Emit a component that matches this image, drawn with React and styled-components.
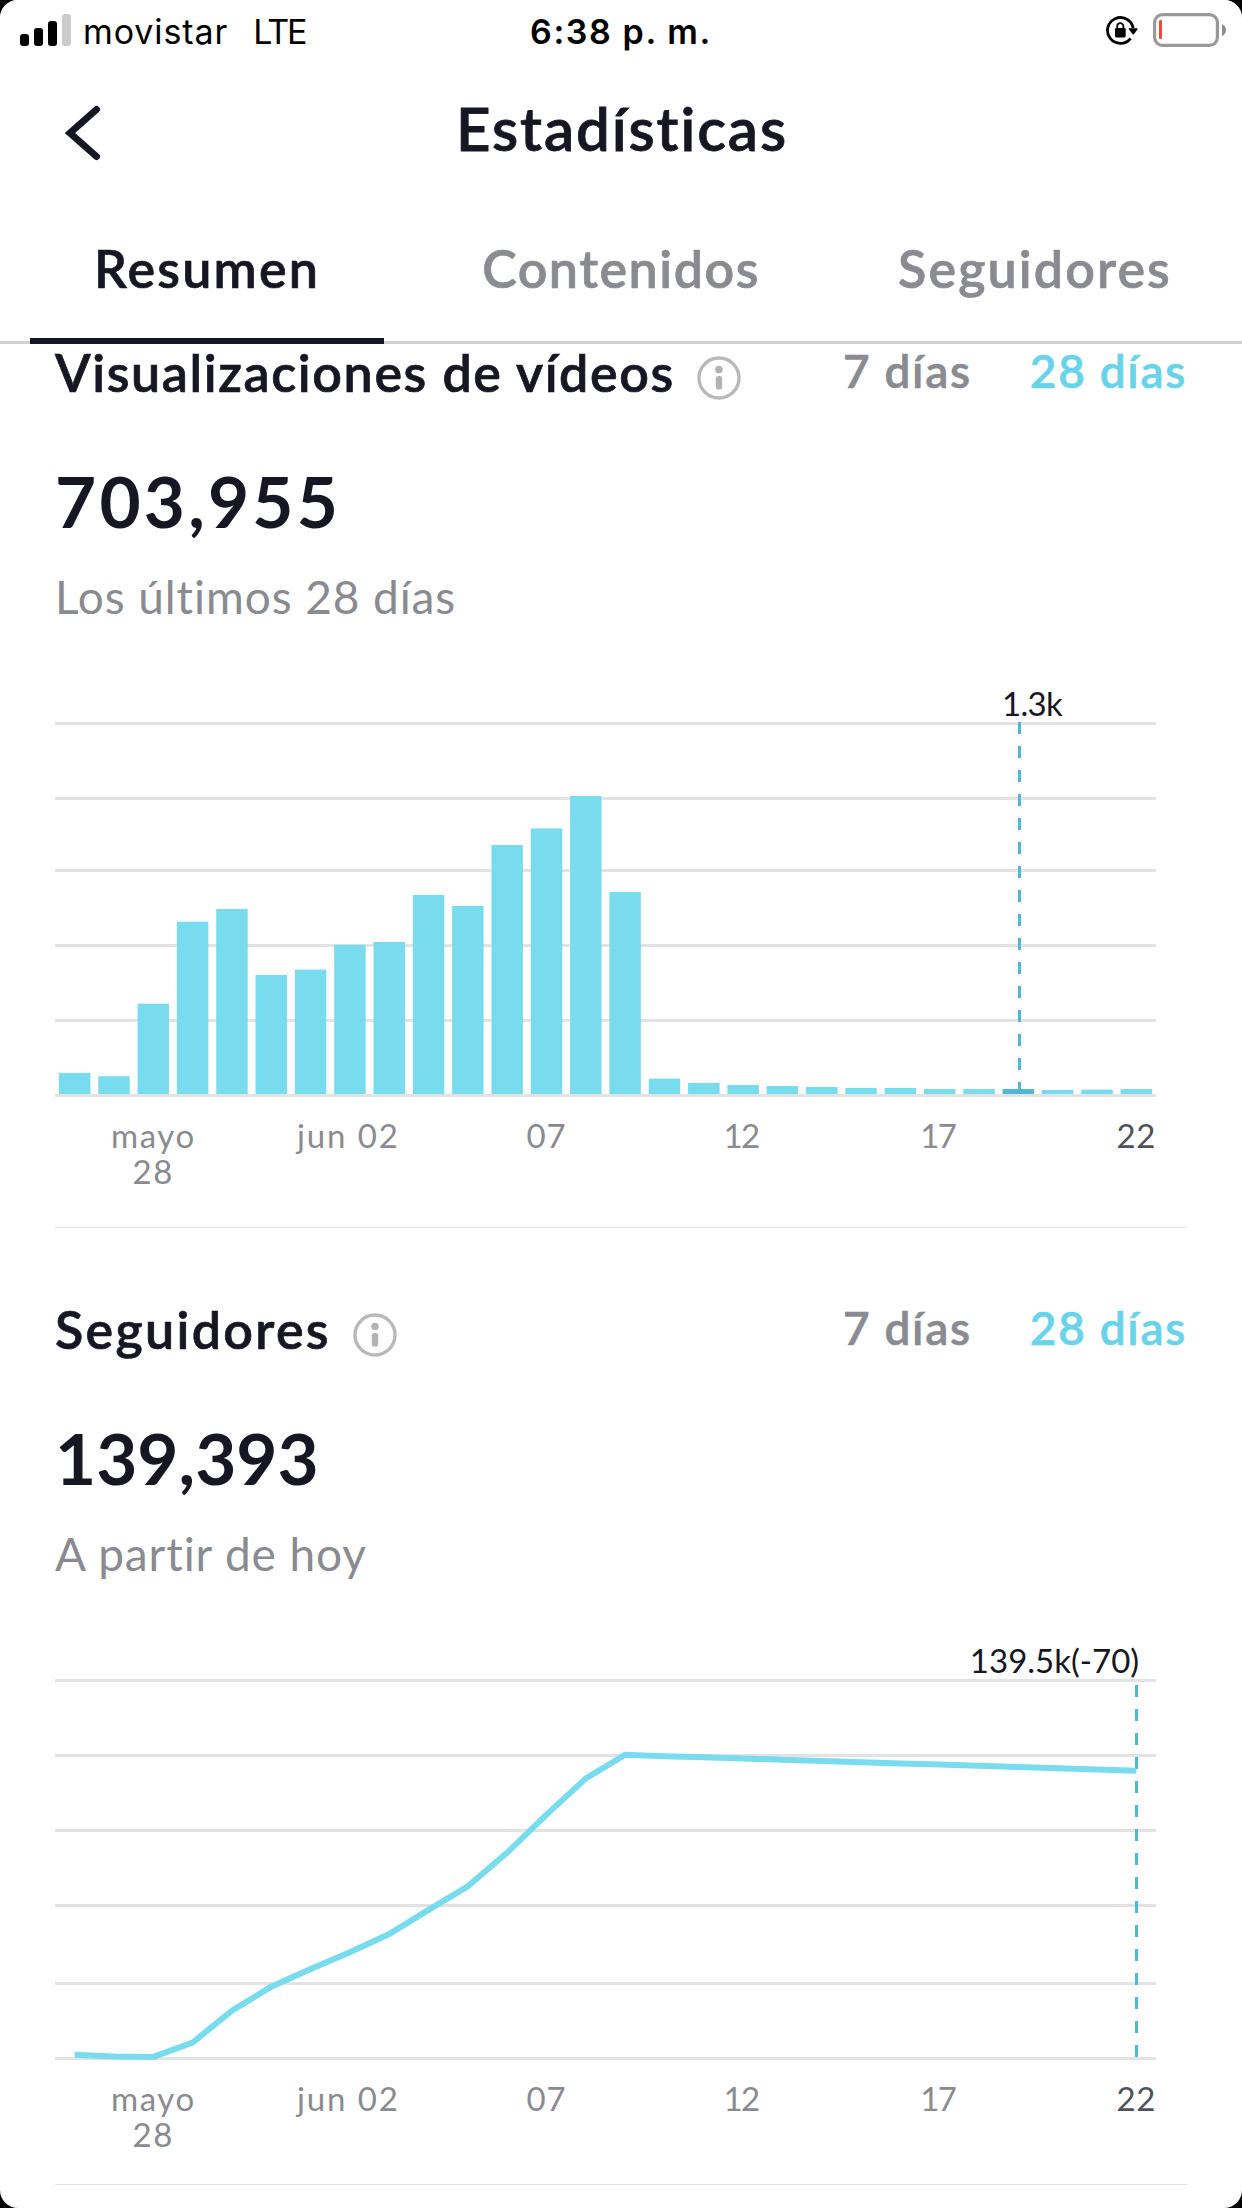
import React from 'react';
import styled, { createGlobalStyle } from 'styled-components';

const GlobalStyle = createGlobalStyle`
  * {
    box-sizing: border-box;
  }

  body {
    margin: 0;
    background-color: #000000;
  }
`;

const Screen = styled.div`
  display: flex;
  flex-direction: column;
  width: 1242px;
  height: 2208px;
  overflow: hidden;

  font-family: Lato, "Liberation Sans", sans-serif;
  color: #161722;
  background-color: #ffffff;
  border-radius: 18px;
`;

const TopArea = styled.header`
  flex: none;
  z-index: 1;
  background-color: #ffffff;
`;

const StatusBar = styled.div`
  display: grid;
  grid-template-columns: 1fr auto 1fr;
  align-items: center;
  height: 60px;
  padding: 3px 16px 0 20px;

  font-family: Inter, "Liberation Sans", sans-serif;
  font-size: 34px;
  line-height: 42px;
  color: #000000;
`;

const StatusGroup = styled.div`
  display: flex;
  align-items: center;
  justify-content: ${({ $end }) => ($end ? 'flex-end' : 'flex-start')};
`;

const StatusIcon = styled.svg`
  display: block;
  flex: none;
  margin-top: ${({ $shift }) => $shift || 0}px;
  margin-right: ${({ $gap }) => $gap || 0}px;
`;

const Carrier = styled.span`
  margin-right: 25px;
  letter-spacing: 0.9px;
`;

const Network = styled.span`
  letter-spacing: -2px;
`;

const Clock = styled.span`
  margin-right: 4px;
  font-weight: 600;
  letter-spacing: 1.6px;
`;

const NavBar = styled.div`
  display: grid;
  grid-template-columns: 1fr auto 1fr;
  align-items: center;
  height: 146px;
  padding: 0 64px;
`;

const BackButton = styled.button`
  width: 40px;
  height: 56px;
  padding: 0;

  background: none;
  border: none;
  cursor: pointer;
`;

const Title = styled.h1`
  margin: -10px -2px 0 0;
  font-size: 60px;
  font-weight: 600;
  line-height: 70px;
  letter-spacing: 1.9px;
  -webkit-text-stroke: 0.8px;
`;

const Tabs = styled.nav`
  display: grid;
  grid-template-columns: repeat(3, 1fr);
  height: 138px;
  box-shadow: inset 0 -3px 0 #d0d0d0;
`;

const Tab = styled.button`
  height: 138px;
  margin: 0 30px;
  padding: 0 0 8px;

  font-family: inherit;
  font-size: 52px;
  font-weight: 600;
  letter-spacing: ${({ $spacing }) => $spacing}px;
  -webkit-text-stroke: 0.7px;
  color: ${({ $active }) => ($active ? '#161722' : '#8a8b91')};

  background: none;
  border: none;
  border-bottom: 6px solid ${({ $active }) => ($active ? '#161722' : 'transparent')};
  cursor: pointer;
`;

/* the list is scrolled, so its first section starts beneath the tabs */
const Content = styled.main`
  flex: none;
  margin-top: -73px;
`;

const Section = styled.section`
  height: 957px;
  margin: 0 55px;
  padding-top: 71px;
  border-bottom: 1px solid #e3e3e4;
`;

const SectionHeader = styled.div`
  display: flex;
  align-items: center;
  height: 60px;
`;

const Heading = styled.h2`
  margin: 0;
  font-size: 52px;
  font-weight: 600;
  line-height: 60px;
  letter-spacing: ${({ $spacing }) => $spacing}px;
  white-space: nowrap;
  -webkit-text-stroke: 0.7px;
`;

const InfoIcon = styled.svg`
  flex: none;
  margin-top: 12px;
  margin-left: 22px;
`;

const Ranges = styled.div`
  display: flex;
  gap: 58px;
  margin-top: -2px;
  margin-left: auto;
`;

const Range = styled.button`
  padding: 0;

  font-family: inherit;
  font-size: 46px;
  font-weight: 600;
  line-height: 54px;
  letter-spacing: 1.7px;
  -webkit-text-stroke: 0.6px;
  color: ${({ $active }) => ($active ? '#69d3ea' : '#8a8b91')};

  background: none;
  border: none;
  cursor: pointer;
`;

const Total = styled.p`
  margin: 57px 0 0;
  font-size: 71px;
  font-weight: 700;
  line-height: 84px;
  letter-spacing: ${({ $spacing }) => $spacing}px;
`;

const Period = styled.p`
  margin: 27px 0 0;
  font-size: 46px;
  line-height: 54px;
  letter-spacing: 0.9px;
  color: #8a8b91;
`;

const ChartSvg = styled.svg`
  display: block;

  text {
    font-size: 33px;
    text-anchor: middle;
  }
`;

const AxisLabel = styled.text`
  letter-spacing: ${({ $spacing }) => $spacing || 0}px;
  fill: ${({ $strong }) => ($strong ? '#50515b' : '#8a8b91')};
`;

const ValueLabel = styled.text`
  letter-spacing: ${({ $spacing }) => $spacing || 0}px;
  fill: #161722;
`;

const PLOT_WIDTH = 1101;
const STEP = PLOT_WIDTH / 28;
const PLOT_TOP = 98;

const center = (i) => STEP * (i + 0.5);

const axisLabels = [
  { day: 2, lines: ['mayo', '28'], spacing: 1.6 },
  { day: 7, lines: ['jun 02'], spacing: 1.9, dx: -1.5 },
  { day: 12, lines: ['07'], spacing: 0.8 },
  { day: 17, lines: ['12'], spacing: -1.6, dx: -2 },
  { day: 22, lines: ['17'], spacing: -1.6, dx: -2 },
  { day: 27, lines: ['22'], spacing: 0.8, strong: true },
];

// bar heights above the base line
const views = [
  21, 17.7, 90.3, 172.3, 185, 119, 124.4, 149.2, 152, 199, 188, 249, 265.6, 298,
  202, 15.4, 11, 9, 8, 7, 6, 6, 5, 5, 5, 4, 4.4, 5,
];

// heights of the followers line
const followers = [
  2.2, 0.4, 0.1, 14.5, 46.4, 70.3, 88.1, 104.8, 122.9, 147.1, 170.7, 204.4, 242.4, 278.6,
  302.2, 300.8, 299.7, 298.6, 297.2, 295.9, 294.8, 293.6, 292.4, 291.2, 290, 288.8, 287.6, 286.3,
];

const Axis = ({ base }) => (
  <g>
    {axisLabels.map(({ day, lines, spacing, dx = 0, strong }) =>
      lines.map((line, i) => (
        <AxisLabel
          key={line}
          x={center(day) + dx}
          y={base + 54 + i * 36}
          $spacing={spacing}
          $strong={strong}
        >
          {line}
        </AxisLabel>
      ))
    )}
  </g>
);

const Grid = ({ lines }) => (
  <g fill="#e3e3e3">
    {lines.map((y) => (
      <rect key={y} x="0" y={y} width={PLOT_WIDTH} height="3" />
    ))}
  </g>
);

const Marker = ({ x, from, to }) => (
  <line
    x1={x}
    x2={x}
    y1={from}
    y2={to}
    stroke="#52b7d3"
    strokeWidth="3"
    strokeDasharray="12 12"
  />
);

const ViewsChart = () => {
  const base = 470;
  const selected = 24;

  return (
    <ChartSvg width="1132" height="603" viewBox="0 0 1132 603">
      <Grid lines={[PLOT_TOP, 173, 245, 320, 395, base]} />
      {views.map((height, i) => (
        <rect
          key={i}
          x={STEP * (i + 0.1)}
          y={base - height}
          width={STEP * 0.8}
          height={height}
          fill={i === selected ? '#52b7d3' : '#78dbee'}
        />
      ))}
      <Marker x={964.5} from={PLOT_TOP} to={base} />
      <ValueLabel x="977" y="92" $spacing={-0.7}>1.3k</ValueLabel>
      <Axis base={base} />
    </ChartSvg>
  );
};

const FollowersChart = () => {
  const base = 476;
  const points = followers.map((height, i) => `${center(i)},${base - height}`).join(' ');

  return (
    <ChartSvg width="1132" height="603" viewBox="0 0 1132 603">
      <Grid lines={[PLOT_TOP, 173, 248, 323, 401, base]} />
      <Marker x={1081.5} from={104} to={base} />
      <polyline points={points} fill="none" stroke="#78dbee" strokeWidth="6" />
      <ValueLabel x="999.5" y="92">139.5k(-70)</ValueLabel>
      <Axis base={base} />
    </ChartSvg>
  );
};

const Stats = ({ title, spacing, total, totalSpacing, period, children }) => (
  <Section>
    <SectionHeader>
      <Heading $spacing={spacing}>{title}</Heading>
      <InfoIcon width="44" height="44" viewBox="0 0 44 44">
        <circle cx="22" cy="22" r="20" fill="none" stroke="#b9b9bd" strokeWidth="3.4" />
        <circle cx="22" cy="13.5" r="3.8" fill="#b3b3b7" />
        <rect x="18.8" y="20" width="6.4" height="13.6" rx="2.6" fill="#b3b3b7" />
      </InfoIcon>
      <Ranges>
        <Range>7 días</Range>
        <Range $active>28 días</Range>
      </Ranges>
    </SectionHeader>
    <Total $spacing={totalSpacing}>{total}</Total>
    <Period>{period}</Period>
    {children}
  </Section>
);

const App = () => (
  <>
    <GlobalStyle />
    <Screen>
      <TopArea>
        <StatusBar>
          <StatusGroup>
            <StatusIcon $gap={12} $shift={-3} width="51" height="32" viewBox="0 0 51 32">
              <rect x="0" y="20" width="9" height="12" rx="3" />
              <rect x="14" y="14" width="9" height="18" rx="3" />
              <rect x="28" y="7" width="9" height="25" rx="3" />
              <rect x="42" y="0" width="9" height="32" rx="3" fill="#cbcbcb" />
            </StatusIcon>
            <Carrier>movistar</Carrier>
            <Network>LTE</Network>
          </StatusGroup>
          <Clock>6:38 p. m.</Clock>
          <StatusGroup $end>
            <StatusIcon $gap={15} $shift={-1} width="32" height="30" viewBox="0 0 32 30">
              <path
                d="M27.1 12.2A12.9 12.9 0 1 0 24.6 22.4"
                fill="none"
                stroke="#000000"
                strokeWidth="2.8"
              />
              <path d="M22.7 12.3h8.2q1.2 0 .6 1.1l-3.4 4.6q-.8 1-1.6 0l-3.5-4.6q-.7-1.1-.3-1.1z" />
              <rect x="9" y="12" width="10.7" height="9.4" rx="1.3" />
              <path
                d="M11.2 12.5v-2.2a3.1 3.1 0 0 1 6.2 0v2.2"
                fill="none"
                stroke="#000000"
                strokeWidth="1.8"
              />
            </StatusIcon>
            <StatusIcon $shift={-3} width="73" height="34" viewBox="0 0 73 34">
              <rect
                x="1.6"
                y="1.6"
                width="62.8"
                height="30.8"
                rx="8"
                fill="none"
                stroke="#999999"
                strokeWidth="3.2"
              />
              <rect x="6" y="7" width="3" height="19" rx="1" fill="#eb4d3d" />
              <path d="M69 11q4 2 4 6t-4 6z" fill="#8f8f8f" />
            </StatusIcon>
          </StatusGroup>
        </StatusBar>
        <NavBar>
          <BackButton aria-label="Atrás">
            <svg width="40" height="56" viewBox="0 0 40 56">
              <path d="M32.5 4.5 6 28l26.5 23.5" fill="none" stroke="#161722" strokeWidth="7" strokeLinecap="round" />
            </svg>
          </BackButton>
          <Title>Estadísticas</Title>
        </NavBar>
        <Tabs>
          <Tab $active $spacing={2.2}>Resumen</Tab>
          <Tab $spacing={1.5}>Contenidos</Tab>
          <Tab $spacing={2.1}>Seguidores</Tab>
        </Tabs>
      </TopArea>
      <Content>
        <Stats
          title="Visualizaciones de vídeos"
          spacing={1.6}
          total="703,955"
          totalSpacing={3.2}
          period="Los últimos 28 días"
        >
          <ViewsChart />
        </Stats>
        <Stats
          title="Seguidores"
          spacing={2.3}
          total="139,393"
          totalSpacing={0}
          period="A partir de hoy"
        >
          <FollowersChart />
        </Stats>
      </Content>
    </Screen>
  </>
);

export default App;
